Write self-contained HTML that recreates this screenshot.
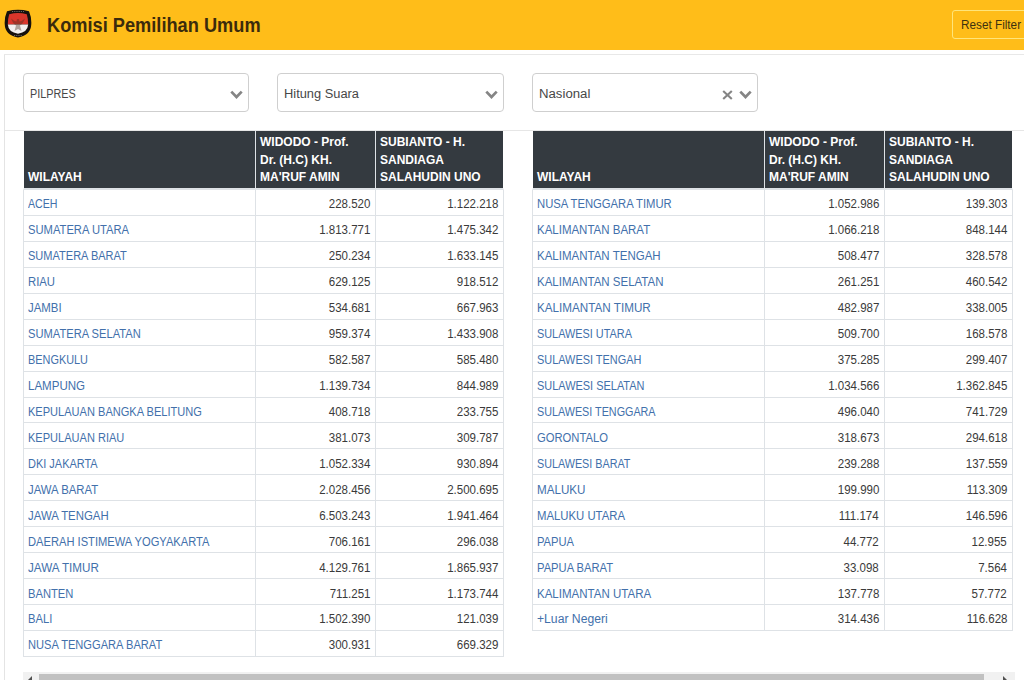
<!DOCTYPE html>
<html><head><meta charset="utf-8">
<style>
html,body{margin:0;padding:0;}
body{width:1024px;height:680px;overflow:hidden;position:relative;background:#fff;font-family:"Liberation Sans",sans-serif;}
.hdr{position:absolute;left:0;top:0;width:1024px;height:50px;background:#ffbd19;}
.logo{position:absolute;left:4px;top:9px;}
.title{position:absolute;left:47px;top:15px;font-size:19.6px;transform:scaleX(0.93);transform-origin:0 50%;font-weight:bold;color:#3b2b0c;white-space:nowrap;line-height:20px;}
.reset{position:absolute;left:952px;top:10px;width:90px;height:27px;border:1px solid #ffe57a;border-radius:3px;box-sizing:content-box;}
.reset span{position:absolute;left:8px;top:7px;transform:scaleX(0.94);transform-origin:0 50%;font-size:12.5px;line-height:15px;color:#3d3210;white-space:nowrap;}
.vline{position:absolute;left:4px;top:55px;width:1px;height:625px;background:#e4e4e4;}
.hline1{position:absolute;left:4px;top:54px;width:1020px;height:1px;background:#e8e8e8;}
.hline2{position:absolute;left:5px;top:130px;width:1019px;height:1px;background:#e6e6e6;}
.sel{position:absolute;top:73px;height:37px;border:1px solid #cfcfcf;border-radius:4px;background:#fff;}
.sel span{position:absolute;left:6px;top:13px;font-size:12px;transform-origin:0 50%;line-height:14px;color:#474747;white-space:nowrap;}
.sel .chev{position:absolute;right:5px;top:16px;}
.sel .xic{position:absolute;right:24px;top:15.5px;}
.t{position:absolute;top:131px;border-collapse:separate;border-spacing:0;table-layout:fixed;width:481px;font-size:12px;}
.t thead tr{height:59px;} .t tbody tr{height:25.94px;}
.t th{box-sizing:border-box;background:#343a40;color:#fff;font-weight:bold;text-align:left;vertical-align:bottom;padding:0 4px 1px 4px;line-height:17.7px;border-left:1px solid #dee2e6;border-bottom:2px solid #dee2e6;}
.t th:first-child{border-left:1px solid #fff;}
.t th:last-child{border-right:1px solid #fff;}
.t td{box-sizing:border-box;border-left:1px solid #dee2e6;border-bottom:1px solid #dee2e6;padding:4px 5px 0 4px;line-height:14px;color:#3a3a3a;white-space:nowrap;}
.t td:last-child{border-right:1px solid #dee2e6;}
.t td a{color:#4270ab;display:inline-block;transform-origin:0 50%;}
.t td.n{text-align:right;} .t td.n span{display:inline-block;transform:scaleX(0.96);transform-origin:100% 50%;}
.sb{position:absolute;left:23px;top:672px;width:992px;height:8px;background:#f1f1f1;}
.sb .thumb{position:absolute;left:16px;top:2px;width:945px;height:6px;background:#c1c1c1;}
.sb .al{position:absolute;left:5px;top:4px;width:0;height:0;border-top:4px solid transparent;border-bottom:4px solid transparent;border-right:4px solid #505050;}
.sb .ar{position:absolute;left:980px;top:4px;width:0;height:0;border-top:4px solid transparent;border-bottom:4px solid transparent;border-left:4px solid #505050;}
</style></head><body>
<div class="hdr">
  <svg class="logo" width="28" height="30" viewBox="0 0 28 30">
    <path d="M3 2.2 Q14 -0.6 25 2.2 Q27.6 8 27.3 15 Q27 26 14 28.6 Q1 26 0.7 15 Q0.4 8 3 2.2 Z" fill="#17110d"/>
    <path d="M5.2 5.2 Q14 3 22.8 5.2 Q24.3 10 24.2 15.6 L3.8 15.6 Q3.7 10 5.2 5.2 Z" fill="#d9362b"/>
    <path d="M3.8 15.6 L24.2 15.6 Q23.6 23.4 14 24.8 Q4.4 23.4 3.8 15.6 Z" fill="#f3f0ee"/>
    <path d="M7 9.5 Q10 12 12.5 12.5 L13 10 L15 10 L15.5 12.5 Q18 12 21 9.5 Q19 15 16 16.5 L17.5 22 L14 20 L10.5 22 L12 16.5 Q9 15 7 9.5 Z" fill="#4a3020" opacity="0.4"/>
    <path d="M8 2.6 L20 2.6" stroke="#bbb" stroke-width="0.8" stroke-dasharray="1.2 1" opacity="0.7"/>
    <path d="M10 26.6 L18 26.6" stroke="#bbb" stroke-width="0.8" stroke-dasharray="1.2 1" opacity="0.7"/>
  </svg>
  <div class="title">Komisi Pemilihan Umum</div>
  <div class="reset"><span>Reset Filter</span></div>
</div>
<div class="hline1"></div>
<div class="vline"></div>
<div class="sel" style="left:23px;width:224px"><span style="transform:scaleX(0.9)">PILPRES</span><svg class="chev" width="13" height="10" viewBox="0 0 13 10"><path d="M1.3 1.6 L6.5 7 L11.7 1.6" fill="none" stroke="#858585" stroke-width="2.7"/></svg></div>
<div class="sel" style="left:277px;width:225px"><span style="transform:scaleX(1.07)">Hitung Suara</span><svg class="chev" width="13" height="10" viewBox="0 0 13 10"><path d="M1.3 1.6 L6.5 7 L11.7 1.6" fill="none" stroke="#858585" stroke-width="2.7"/></svg></div>
<div class="sel" style="left:532px;width:224px"><span style="transform:scaleX(1.1)">Nasional</span><svg class="xic" width="11" height="10" viewBox="0 0 11 10"><path d="M1.2 1 L9.8 9 M9.8 1 L1.2 9" fill="none" stroke="#858585" stroke-width="2.1"/></svg><svg class="chev" width="13" height="10" viewBox="0 0 13 10"><path d="M1.3 1.6 L6.5 7 L11.7 1.6" fill="none" stroke="#858585" stroke-width="2.7"/></svg></div>
<div class="hline2"></div>
<table class="t" style="left:23px">
<colgroup><col style="width:232px"><col style="width:120px"><col style="width:129px"></colgroup>
<thead><tr><th>WILAYAH</th><th>WIDODO - Prof.<br>Dr. (H.C) KH.<br>MA'RUF AMIN</th><th>SUBIANTO - H.<br>SANDIAGA<br>SALAHUDIN UNO</th></tr></thead><tbody>
<tr><td><a style="transform:scaleX(0.885)">ACEH</a></td><td class="n"><span>228.520</span></td><td class="n"><span>1.122.218</span></td></tr>
<tr><td><a style="transform:scaleX(0.934)">SUMATERA UTARA</a></td><td class="n"><span>1.813.771</span></td><td class="n"><span>1.475.342</span></td></tr>
<tr><td><a style="transform:scaleX(0.919)">SUMATERA BARAT</a></td><td class="n"><span>250.234</span></td><td class="n"><span>1.633.145</span></td></tr>
<tr><td><a style="transform:scaleX(0.943)">RIAU</a></td><td class="n"><span>629.125</span></td><td class="n"><span>918.512</span></td></tr>
<tr><td><a style="transform:scaleX(0.951)">JAMBI</a></td><td class="n"><span>534.681</span></td><td class="n"><span>667.963</span></td></tr>
<tr><td><a style="transform:scaleX(0.929)">SUMATERA SELATAN</a></td><td class="n"><span>959.374</span></td><td class="n"><span>1.433.908</span></td></tr>
<tr><td><a style="transform:scaleX(0.908)">BENGKULU</a></td><td class="n"><span>582.587</span></td><td class="n"><span>585.480</span></td></tr>
<tr><td><a style="transform:scaleX(0.961)">LAMPUNG</a></td><td class="n"><span>1.139.734</span></td><td class="n"><span>844.989</span></td></tr>
<tr><td><a style="transform:scaleX(0.921)">KEPULAUAN BANGKA BELITUNG</a></td><td class="n"><span>408.718</span></td><td class="n"><span>233.755</span></td></tr>
<tr><td><a style="transform:scaleX(0.92)">KEPULAUAN RIAU</a></td><td class="n"><span>381.073</span></td><td class="n"><span>309.787</span></td></tr>
<tr><td><a style="transform:scaleX(0.914)">DKI JAKARTA</a></td><td class="n"><span>1.052.334</span></td><td class="n"><span>930.894</span></td></tr>
<tr><td><a style="transform:scaleX(0.946)">JAWA BARAT</a></td><td class="n"><span>2.028.456</span></td><td class="n"><span>2.500.695</span></td></tr>
<tr><td><a style="transform:scaleX(0.95)">JAWA TENGAH</a></td><td class="n"><span>6.503.243</span></td><td class="n"><span>1.941.464</span></td></tr>
<tr><td><a style="transform:scaleX(0.929)">DAERAH ISTIMEWA YOGYAKARTA</a></td><td class="n"><span>706.161</span></td><td class="n"><span>296.038</span></td></tr>
<tr><td><a style="transform:scaleX(0.972)">JAWA TIMUR</a></td><td class="n"><span>4.129.761</span></td><td class="n"><span>1.865.937</span></td></tr>
<tr><td><a style="transform:scaleX(0.933)">BANTEN</a></td><td class="n"><span>711.251</span></td><td class="n"><span>1.173.744</span></td></tr>
<tr><td><a style="transform:scaleX(0.936)">BALI</a></td><td class="n"><span>1.502.390</span></td><td class="n"><span>121.039</span></td></tr>
<tr><td><a style="transform:scaleX(0.926)">NUSA TENGGARA BARAT</a></td><td class="n"><span>300.931</span></td><td class="n"><span>669.329</span></td></tr>
</tbody></table>
<table class="t" style="left:532px">
<colgroup><col style="width:232px"><col style="width:120px"><col style="width:129px"></colgroup>
<thead><tr><th>WILAYAH</th><th>WIDODO - Prof.<br>Dr. (H.C) KH.<br>MA'RUF AMIN</th><th>SUBIANTO - H.<br>SANDIAGA<br>SALAHUDIN UNO</th></tr></thead><tbody>
<tr><td><a style="transform:scaleX(0.938)">NUSA TENGGARA TIMUR</a></td><td class="n"><span>1.052.986</span></td><td class="n"><span>139.303</span></td></tr>
<tr><td><a style="transform:scaleX(0.957)">KALIMANTAN BARAT</a></td><td class="n"><span>1.066.218</span></td><td class="n"><span>848.144</span></td></tr>
<tr><td><a style="transform:scaleX(0.959)">KALIMANTAN TENGAH</a></td><td class="n"><span>508.477</span></td><td class="n"><span>328.578</span></td></tr>
<tr><td><a style="transform:scaleX(0.958)">KALIMANTAN SELATAN</a></td><td class="n"><span>261.251</span></td><td class="n"><span>460.542</span></td></tr>
<tr><td><a style="transform:scaleX(0.973)">KALIMANTAN TIMUR</a></td><td class="n"><span>482.987</span></td><td class="n"><span>338.005</span></td></tr>
<tr><td><a style="transform:scaleX(0.907)">SULAWESI UTARA</a></td><td class="n"><span>509.700</span></td><td class="n"><span>168.578</span></td></tr>
<tr><td><a style="transform:scaleX(0.91)">SULAWESI TENGAH</a></td><td class="n"><span>375.285</span></td><td class="n"><span>299.407</span></td></tr>
<tr><td><a style="transform:scaleX(0.912)">SULAWESI SELATAN</a></td><td class="n"><span>1.034.566</span></td><td class="n"><span>1.362.845</span></td></tr>
<tr><td><a style="transform:scaleX(0.898)">SULAWESI TENGGARA</a></td><td class="n"><span>496.040</span></td><td class="n"><span>741.729</span></td></tr>
<tr><td><a style="transform:scaleX(0.936)">GORONTALO</a></td><td class="n"><span>318.673</span></td><td class="n"><span>294.618</span></td></tr>
<tr><td><a style="transform:scaleX(0.898)">SULAWESI BARAT</a></td><td class="n"><span>239.288</span></td><td class="n"><span>137.559</span></td></tr>
<tr><td><a style="transform:scaleX(0.969)">MALUKU</a></td><td class="n"><span>199.990</span></td><td class="n"><span>113.309</span></td></tr>
<tr><td><a style="transform:scaleX(0.945)">MALUKU UTARA</a></td><td class="n"><span>111.174</span></td><td class="n"><span>146.596</span></td></tr>
<tr><td><a style="transform:scaleX(0.93)">PAPUA</a></td><td class="n"><span>44.772</span></td><td class="n"><span>12.955</span></td></tr>
<tr><td><a style="transform:scaleX(0.932)">PAPUA BARAT</a></td><td class="n"><span>33.098</span></td><td class="n"><span>7.564</span></td></tr>
<tr><td><a style="transform:scaleX(0.96)">KALIMANTAN UTARA</a></td><td class="n"><span>137.778</span></td><td class="n"><span>57.772</span></td></tr>
<tr><td><a style="transform:scaleX(1.014)">+Luar Negeri</a></td><td class="n"><span>314.436</span></td><td class="n"><span>116.628</span></td></tr>
</tbody></table>
<div class="sb"><div class="al"></div><div class="thumb"></div><div class="ar"></div></div>
</body></html>
